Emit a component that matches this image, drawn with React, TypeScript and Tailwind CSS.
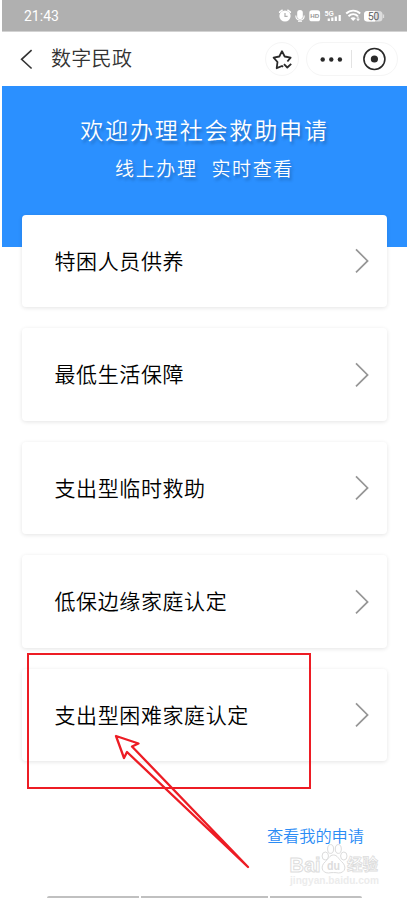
const items = [
  '特困人员供养',
  '最低生活保障',
  '支出型临时救助',
  '低保边缘家庭认定',
  '支出型困难家庭认定',
];

function StatusIcons() {
  return (
    <svg className="mt-px h-5 w-[110px]" viewBox="276 6 110 20" fill="none">
      <circle cx="285" cy="16" r="5.6" fill="#fff" />
      <path d="M279.6 12.2l2.6-2M290.4 12.2l-2.6-2" stroke="#fff" strokeWidth="1.5" strokeLinecap="round" />
      <path d="M285 13v3.4h2.6" stroke="#b0b0b0" strokeWidth="1.2" />
      <rect x="297.2" y="10" width="5.6" height="9" rx="2.8" fill="#fff" />
      <path d="M295.8 15.5c0 6 8.4 6 8.4 0M298 21.3h4" stroke="#fff" strokeWidth="1.1" />
      <rect x="309.3" y="10.3" width="10.8" height="11" rx="2.6" fill="#fff" />
      <text x="310.2" y="18.3" fontSize="6.2" fontWeight="700" fill="#999" fontFamily="Liberation Sans, sans-serif">HD</text>
      <text x="324.7" y="15.6" fontSize="6.8" fontWeight="700" fill="#fff" fontFamily="Liberation Sans, sans-serif">5G</text>
      <path d="M328.8 18.5v2.5M332.3 17.6v3.4M335.8 16.500v4.500M339.7 15v6" stroke="#fff" strokeWidth="2.2" />
      <path d="M346.2 13.5c4-3.9 10-3.9 14 0M348.5 16.2c2.8-2.7 6.6-2.7 9.4 0" stroke="#fff" strokeWidth="1.9" />
      <path d="M350.5 18.3c1.5-1.5 3.8-1.5 5.3 0L353.2 21z" fill="#fff" />
      <path d="M358 16.5v4M356.8 18.8l1.2 1.7 1.4-1.7" stroke="#fff" strokeWidth="1" />
      <rect x="364" y="11" width="18.5" height="10.6" rx="3.5" fill="#ddd" />
      <path d="M367.5 11H375v10.6h-7.5a3.5 3.5 0 0 1-3.5-3.5v-3.6a3.5 3.5 0 0 1 3.5-3.5z" fill="#fff" />
      <path d="M383.5 14.5v3.5" stroke="#ddd" strokeWidth="1.3" />
      <text x="368" y="20" fontSize="10" fill="#555" stroke="#555" strokeWidth=".25" fontFamily="Roboto, sans-serif">50</text>
    </svg>
  );
}

function Header() {
  return (
    <header className="flex h-[54px] items-center bg-white pr-[9px] pb-px pl-[18px]">
      <svg className="h-6 w-4" viewBox="20 46 16 24" fill="none" stroke="#333" strokeWidth="1.6">
        <path d="M31.6 49.2L21.6 58.3l10 9.2" />
      </svg>
      <h1 className="-mt-px ml-[15px] text-[20px] leading-7 tracking-[0.3px] text-[#333]">数字民政</h1>
      <div className="ml-auto flex items-center gap-[7px]">
        <button className="flex size-[34px] items-center justify-center rounded-full border border-[#f5f5f5]">
          <svg className="size-6" viewBox="270 46 24 24" fill="none" stroke="#2b2b2b" strokeWidth="1.8" strokeLinejoin="round">
            <path d="M283.200 65.700l-1.200-.7-5.300 2.200.8-6.200-3.900-4.300 5.700-1.200 2.700-5.300 2.700 5.300 5.900 1.200-3.200 3.800" />
            <path d="M284 63.200l3.300 3.300 3.900-3.600" />
          </svg>
        </button>
        <div className="flex h-[34px] w-[92px] items-center rounded-full border border-[#f5f5f5]">
          <svg className="h-8 w-[90px]" viewBox="307 42 90 32" fill="none">
            <g fill="#292929">
              <circle cx="322.7" cy="58.5" r="2.2" />
              <circle cx="331.3" cy="58.5" r="2.2" />
              <circle cx="339.9" cy="58.5" r="2.2" />
              <circle cx="374.4" cy="58" r="3.6" />
            </g>
            <path d="M351.5 49v18" stroke="#e3e3e3" />
            <circle cx="374.4" cy="58" r="10.5" stroke="#292929" strokeWidth="1.6" />
          </svg>
        </div>
      </div>
    </header>
  );
}

function Card({ label }: { label: string }) {
  return (
    <button className="flex h-[92.3px] w-full items-center justify-between rounded-[4px] bg-white pr-[17px] pl-[32.5px] shadow-[0_1px_4px_rgba(0,0,0,0.11)]">
      <span className="-mt-[3px] text-[21px] leading-8 tracking-[0.6px] text-black">{label}</span>
      <svg className="h-7 w-4" viewBox="0 0 16 28" fill="none" stroke="#969696" strokeWidth="1.7">
        <path d="M2 2.4l11.6 11.5L2 25.4" />
      </svg>
    </button>
  );
}

function Watermark() {
  return (
    <svg className="absolute top-[843px] left-[286px] h-[46px] w-[96px]" viewBox="286 843 96 46" fill="#fff" stroke="#dcdcdc" strokeWidth="1">
      <text x="289.5" y="872" fontSize="21" fontWeight="700" textLength="31" lengthAdjust="spacingAndGlyphs" fontFamily="Liberation Sans, sans-serif">Bai</text>
      <ellipse cx="325.3" cy="856" rx="3.2" ry="4" />
      <ellipse cx="330.6" cy="849" rx="3" ry="4.4" />
      <ellipse cx="338.3" cy="849" rx="3" ry="4.4" />
      <ellipse cx="343.8" cy="856" rx="3.2" ry="4" />
      <path d="M333.5 855c-4 0-5 4-8 6.500-5.500 4.500-4 11.500 3 11.500 3-.6 7-.6 10 0 7 0 8.500-7 3-11.500-3-2.500-4-6.500-8-6.500z" />
      <text x="327" y="870" fontSize="12.5" fontWeight="700" fill="#dcdcdc" stroke="none" fontFamily="Liberation Sans, sans-serif" textLength="13" lengthAdjust="spacingAndGlyphs">du</text>
      <text x="347" y="870" fontSize="16" fontWeight="700" strokeWidth=".8" fontFamily="Noto Sans CJK SC, sans-serif" textLength="31" lengthAdjust="spacingAndGlyphs">经验</text>
      <text x="290" y="883.5" fontSize="10" fontWeight="700" fill="#ececec" stroke="none" textLength="89" lengthAdjust="spacingAndGlyphs" fontFamily="Liberation Sans, sans-serif">jingyan.baidu.com</text>
    </svg>
  );
}

function Annotation() {
  return (
    <svg className="pointer-events-none absolute inset-0 h-[898px] w-[407px]" viewBox="0 0 407 898" fill="none" stroke="#ed1c24" strokeWidth="2" strokeLinejoin="round">
      <path d="M28 654H310V788H28z" strokeLinejoin="miter" />
      <path d="M248 867L127 752l-3 6-8-22 22.500 7.500-6.500 3z" strokeWidth="2.300" />
    </svg>
  );
}

export default function App() {
  return (
    <div className="relative flex h-[898px] w-[407px] flex-col overflow-hidden bg-white pl-[2px] font-['Noto_Sans_CJK_SC',sans-serif] font-[350]">
      <div className="flex h-8 shrink-0 items-center justify-between border-b border-[#d2d2d2] bg-[#b0b0b0] pr-[21px] pl-[22px]">
        <span className="font-['Roboto',sans-serif] text-[14px] leading-5 font-normal text-white">21:43</span>
        <StatusIcons />
      </div>
      <Header />
      <section className="h-[161px] shrink-0 bg-[#2b90ff] pt-[25px] text-center text-white [text-shadow:2px_3px_3px_rgba(0,0,0,0.24)]">
        <h2 className="text-[23px] leading-[36px] tracking-[1.85px]">欢迎办理社会救助申请</h2>
        <p className="mt-[7px] flex justify-center gap-[14px] text-[19px] leading-7 tracking-[1.6px]">
          <span>线上办理</span>
          <span>实时查看</span>
        </p>
      </section>
      <main className="z-10 -mt-8 flex flex-col gap-[21.2px] pr-5 pl-5">
        {items.map((label) => (
          <Card key={label} label={label} />
        ))}
      </main>
      <a className="mt-[62px] mr-[43px] self-end text-[16.2px] leading-6 text-[#2b8cf5]">查看我的申请</a>
      <div className="mt-auto mr-[45px] ml-[45px] flex h-[2px] gap-[2px]">
        <div className="w-[92px] rounded-tl bg-[#c0c0c0]" />
        <div className="w-[127px] bg-[#c0c0c0]" />
        <div className="w-[92px] rounded-tr bg-[#c0c0c0]" />
      </div>
      <Watermark />
      <div className="pointer-events-none absolute inset-0 z-20">
        <Annotation />
      </div>
    </div>
  );
}
